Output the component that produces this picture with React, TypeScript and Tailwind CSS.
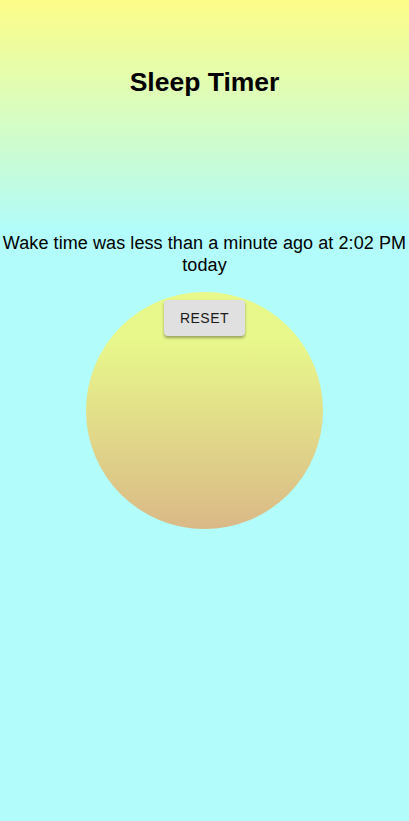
import React from 'react'

export default function App() {
  return (
    <div className="min-h-[821px] w-full bg-[#b2fcfc] font-['Liberation_Sans',Arial,sans-serif] text-black">
      <div className="flex h-[226px] flex-col items-center bg-[linear-gradient(to_bottom,#fdfd88,#b3fcf7)] pt-[66px]">
        <h1 className="text-[26.5px] font-bold leading-[32px]">Sleep Timer</h1>
      </div>
      <p className="mt-[6px] px-0.5 text-center text-[18px] leading-[22px] tracking-[0.08px]">
        Wake time was less than a minute ago at 2:02 PM today
      </p>
      <div className="mt-[16px] flex justify-center">
        <div className="flex h-[237px] w-[237px] flex-col items-center rounded-full bg-[linear-gradient(to_bottom,#e8f88b_20%,#dab987)] pt-[8px]">
          <button
            type="button"
            className="h-[36px] w-[81px] rounded-[4px] bg-[#e0e0e0] text-[14px] tracking-[0.5px] text-[#1a1a1a] shadow-[0_2px_3px_rgba(0,0,0,0.35)]"
          >
            RESET
          </button>
        </div>
      </div>
    </div>
  )
}
